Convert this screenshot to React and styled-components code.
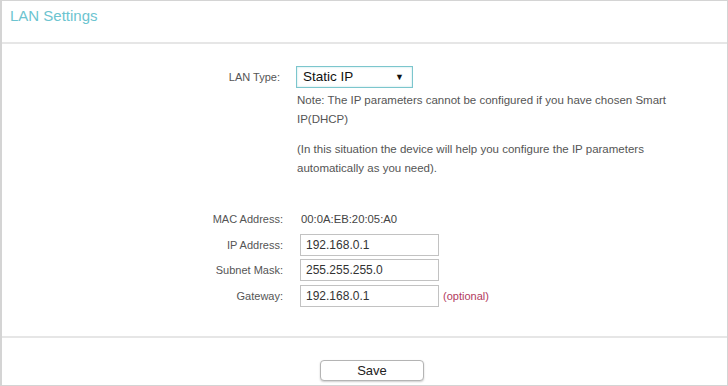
import React from "react";
import styled, { createGlobalStyle } from "styled-components";

const GlobalStyle = createGlobalStyle`
  html, body {
    margin: 0;
    padding: 0;
    background: #ffffff;
  }
  body {
    font-family: "Liberation Sans", Arial, sans-serif;
  }
`;

const Page = styled.div`
  box-sizing: border-box;
  width: 728px;
  height: 386px;
  border: 1px solid #d4d4d4;
  border-left-width: 2px;
  display: flex;
  flex-direction: column;
`;

const Header = styled.div`
  height: 43px;
  flex-shrink: 0;
  border-bottom: 2px solid #e6e6e6;
  padding: 6px 0 0 8px;
  box-sizing: border-box;
`;

const Title = styled.h1`
  margin: 0;
  font-size: 15px;
  font-weight: normal;
  color: #6cc4d0;
  line-height: 18px;
`;

const Content = styled.div`
  height: 294px;
  flex-shrink: 0;
  box-sizing: border-box;
  border-bottom: 2px solid #e6e6e6;
  padding-top: 22px;
`;

const Form = styled.div`
  display: grid;
  grid-template-columns: 281px 1fr;
  column-gap: 13px;
  font-size: 11px;
  color: #555;
`;

const Label = styled.div`
  text-align: right;
  height: ${(p) => p.h || 22}px;
  line-height: ${(p) => p.h || 22}px;
  margin-top: ${(p) => p.mt || 0}px;
  padding-right: ${(p) => p.pr || 0}px;
`;

const Field = styled.div`
  display: flex;
  align-items: center;
  gap: 4px;
  height: ${(p) => p.h || 22}px;
  margin-top: ${(p) => p.mt || 0}px;
  margin-left: ${(p) => p.ml || 0}px;
`;

const SelectBox = styled.div`
  position: relative;
  box-sizing: border-box;
  width: 117px;
  height: 22px;
  border: 1px solid #7cc6cd;
  box-shadow: inset 0 0 2px rgba(124, 198, 205, 0.6);
  font-size: 13.5px;
  color: #111;
  line-height: 20px;
  padding-left: 6px;
`;

const Arrow = styled.span`
  position: absolute;
  right: 8px;
  top: 0;
  font-size: 9px;
  color: #111;
`;

const Notes = styled.div`
  grid-column: 2;
  margin-left: 1px;
  margin-top: 3px;
  width: 390px;
  font-size: 11.5px;
  line-height: 19px;
  color: #555;
`;

const Para = styled.p`
  margin: 0 0 ${(p) => p.mb || 0}px 0;
`;

const Value = styled.span`
  font-size: 11.3px;
  color: #444;
  margin-left: 1px;
`;

const Input = styled.div`
  box-sizing: border-box;
  width: 139px;
  height: 22px;
  border: 1px solid #c2c2c2;
  font-size: 12px;
  color: #333;
  line-height: 20px;
  padding-left: 5px;
`;

const Optional = styled.span`
  color: #b23a5e;
  font-size: 11px;
`;

const Footer = styled.div`
  flex: 1;
  display: flex;
  justify-content: center;
  padding-top: 22px;
  box-sizing: border-box;
  padding-left: 15px;
`;

const SaveButton = styled.button`
  box-sizing: border-box;
  width: 104px;
  height: 21px;
  border: 1px solid #b4b4b4;
  border-radius: 4px;
  background: #ffffff;
  box-shadow: 0 1px 2px rgba(0, 0, 0, 0.2);
  font-family: "Liberation Sans", Arial, sans-serif;
  font-size: 13px;
  color: #222;
  padding: 0;
  cursor: pointer;
`;

const rows = [
  { label: "IP Address:", value: "192.168.0.1", mt: 5 },
  { label: "Subnet Mask:", value: "255.255.255.0", mt: 3 },
  { label: "Gateway:", value: "192.168.0.1", mt: 4, optional: true },
];

export default function App() {
  return (
    <>
      <GlobalStyle />
      <Page>
        <Header>
          <Title>LAN Settings</Title>
        </Header>
        <Content>
          <Form>
            <Label pr={3}>LAN Type:</Label>
            <Field>
              <SelectBox>
                Static IP
                <Arrow>▼</Arrow>
              </SelectBox>
            </Field>
            <Notes>
              <Para mb={11}>
                Note: The IP parameters cannot be configured if you have chosen Smart IP(DHCP)
              </Para>
              <Para>
                (In this situation the device will help you configure the IP parameters
                automatically as you need).
              </Para>
            </Notes>
            <Label h={20} mt={31}>MAC Address:</Label>
            <Field h={20} mt={31} ml={4}>
              <Value>00:0A:EB:20:05:A0</Value>
            </Field>
            {rows.map((r) => (
              <React.Fragment key={r.label}>
                <Label mt={r.mt}>{r.label}</Label>
                <Field mt={r.mt} ml={4}>
                  <Input>{r.value}</Input>
                  {r.optional && <Optional>(optional)</Optional>}
                </Field>
              </React.Fragment>
            ))}
          </Form>
        </Content>
        <Footer>
          <div>
            <SaveButton>Save</SaveButton>
          </div>
        </Footer>
      </Page>
    </>
  );
}
